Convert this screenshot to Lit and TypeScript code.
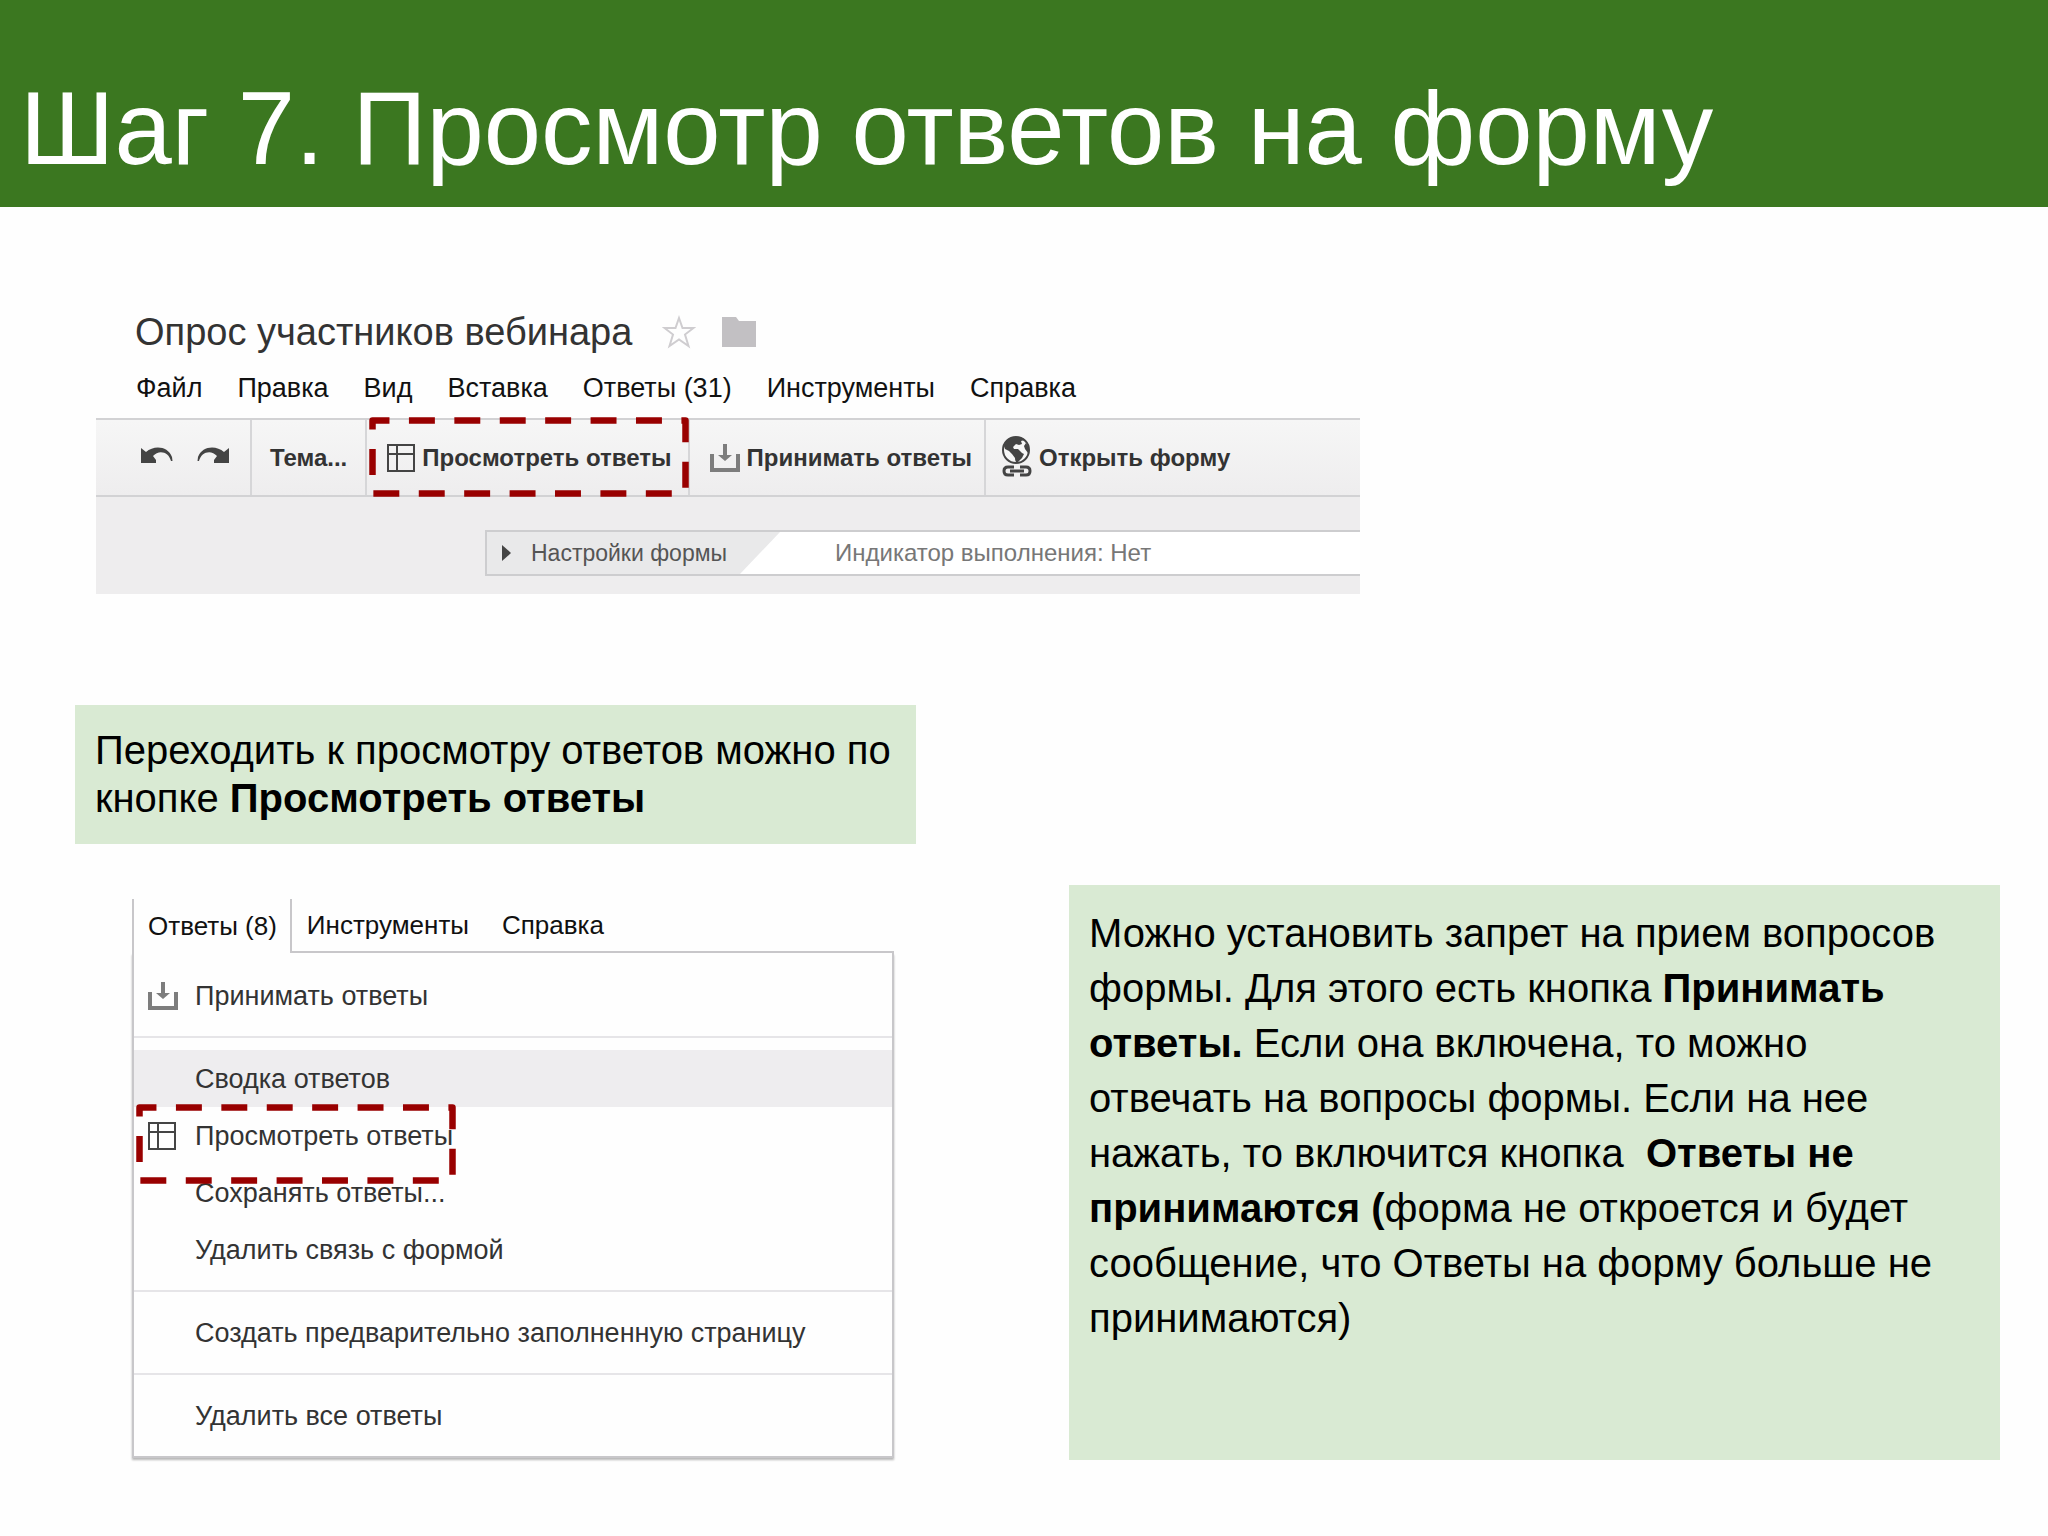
import { LitElement, html, css, svg, nothing } from "lit";
import { customElement, property } from "lit/decorators.js";

type IconName = "undo" | "redo" | "table" | "inbox" | "globe";

interface MenuEntry {
  label: string;
  icon?: IconName;
  active?: boolean;
}

const FORM_MENU = ["Файл", "Правка", "Вид", "Вставка", "Ответы (31)", "Инструменты", "Справка"];

const ANSWER_GROUPS: MenuEntry[][] = [
  [{ label: "Принимать ответы", icon: "inbox" }],
  [
    { label: "Сводка ответов", active: true },
    { label: "Просмотреть ответы", icon: "table" },
    { label: "Сохранять ответы..." },
    { label: "Удалить связь с формой" },
  ],
  [{ label: "Создать предварительно заполненную страницу" }],
  [{ label: "Удалить все ответы" }],
];

const SHAPES = {
  undo: {
    w: 34, h: 20,
    body: svg`<path fill="#444" d="M1 2 L6 6 C14 -1 28 0 32 11 L32.500 15 L31 15 C29 6 19 3 13 10 L16 14 L16 17 L1 17 Z"/>`,
  },
  redo: {
    w: 34, h: 20,
    body: svg`<path fill="#444" d="M33 2 L28 6 C20 -1 6 0 2 11 L1.500 15 L3 15 C5 6 15 3 21 10 L18 14 L18 17 L33 17 Z"/>`,
  },
  table: {
    w: 28, h: 28,
    body: svg`<path fill="none" stroke="#444" stroke-width="2" d="M1 1H27V27H1Z"/>
      <path fill="none" stroke="#444" stroke-width="2" d="M1 10H27M10 1V27"/>`,
  },
  inbox: {
    w: 30, h: 28,
    body: svg`<path fill="none" stroke="#7d7d7d" stroke-width="4" d="M2 10V26H28V10"/>
      <path fill="#7d7d7d" d="M13 0H17V11H22L15 17L8 11H13Z"/>`,
  },
  globe: {
    w: 30, h: 44,
    body: svg`<circle cx="14" cy="14" r="13" fill="#f6f6f6" stroke="#444" stroke-width="2"/>
      <path fill="#444" d="M2 10C4 4 9 1 14 1C18 1 21 2 23 4L19 5L20 8L17 9L14 8L11 11L12 13L16 13L20 17L22 18L20 22L16 26C14 27 13 25 13 22L10 18L7 15L3 13Z"/>
      <path fill="#444" d="M24 7L27 12L26 17L23 13L22 10Z"/>
      <path fill="none" stroke="#444" stroke-width="3" d="M12 31H6Q2 31 2 35Q2 39 6 39H12M18 31H24Q28 31 28 35Q28 39 24 39H18"/>
      <path stroke="#444" stroke-width="3" d="M8 35H22"/>`,
  },
};

@customElement("ui-icon")
class UiIcon extends LitElement {
  static styles = css`
    :host { display: inline-flex; flex: none; }
    svg { display: block; }
  `;
  @property() name: IconName = "table";
  render() {
    const s = SHAPES[this.name];
    return html`<svg width=${s.w} height=${s.h} viewBox="0 0 ${s.w} ${s.h}" aria-hidden="true">${s.body}</svg>`;
  }
}

@customElement("dash-frame")
class DashFrame extends LitElement {
  static styles = css`
    :host { display: block; pointer-events: none; }
    svg { display: block; }
  `;
  render() {
    return html`<svg width="320" height="80" viewBox="0 0 320 80" aria-hidden="true">
      <rect x="3.500" y="3.500" width="313" height="73" fill="none" stroke="#990000" stroke-width="6.500"
        stroke-linejoin="round" pathLength="773.500" stroke-dasharray="26 19.500" stroke-dashoffset="9"/>
    </svg>`;
  }
}

@customElement("app-root")
class AppRoot extends LitElement {
  static styles = css`
    :host {
      display: block;
      min-height: 100vh;
      background: #fefefe;
      color: #000;
      font-family: "Liberation Sans", Arial, sans-serif;
    }
    * { box-sizing: border-box; }
    button {
      font: inherit;
      color: inherit;
      background: none;
      border: 0;
      padding: 0;
      margin: 0;
      text-align: left;
      white-space: nowrap;
    }
    .banner {
      background: #3b7720;
      padding: 70px 20px 19px;
    }
    .banner h1 {
      margin: 0;
      color: #fff;
      font-size: 103px;
      line-height: 118px;
      font-weight: 400;
    }
    .form {
      margin: 103px 688px 0 96px;
      color: #333;
    }
    .form-name {
      display: flex;
      align-items: center;
      gap: 30px;
      padding-left: 39px;
      font-size: 38px;
      line-height: 44px;
    }
    .form-name h2 { margin: 0; font: inherit; }
    .form-name svg { display: block; }
    .marks { display: flex; gap: 26px; }
    .menubar {
      display: flex;
      gap: 35px;
      margin-top: 18px;
      padding-left: 40px;
      font-size: 27px;
      line-height: 32px;
      color: #111;
    }
    .toolbar {
      position: relative;
      display: flex;
      height: 79px;
      margin-top: 14px;
      border-top: 2px solid #d2d2d4;
      border-bottom: 2px solid #d2d2d4;
      background: linear-gradient(#f6f6f6, #eeedee);
      font-size: 24px;
      font-weight: 700;
    }
    .tool {
      display: flex;
      align-items: center;
      gap: 7px;
      padding: 0 16px 0 20px;
      border-right: 2px solid #d6d6d8;
    }
    .tool.history { gap: 22px; padding: 0 20px 0 44px; }
    .tool.theme { padding: 0 18px; }
    .tool.accept { padding-right: 12px; }
    .tool.open { padding-left: 16px; border-right: 0; }
    .tool-frame { position: absolute; left: 273px; top: -3px; }
    .canvas {
      padding: 33px 0 18px 389px;
      background: #eeedee;
    }
    .settings {
      display: flex;
      align-items: center;
      height: 46px;
      border: 2px solid #cdcdcf;
      border-right: 0;
      background: #fff;
      font-size: 24px;
      color: #777;
    }
    .settings-label {
      display: flex;
      align-items: center;
      gap: 20px;
      width: 293px;
      height: 42px;
      padding-left: 15px;
      background: #e9e9ea;
      clip-path: polygon(0 0, 100% 0, calc(100% - 40px) 100%, 0 100%);
      font-size: 23px;
      color: #555;
    }
    .settings-value { padding-left: 55px; white-space: nowrap; }
    .lower {
      display: grid;
      grid-template-columns: 841fr 931fr;
      column-gap: 153px;
      margin: 111px 48px 0 75px;
      padding-bottom: 75px;
    }
    .note {
      margin: 0;
      padding: 21px 20px 22px;
      background: #d9ead3;
      font-size: 40px;
      line-height: 48px;
    }
    .note.wide {
      margin-top: 180px;
      padding-right: 48px;
      line-height: 55px;
    }
    .answers {
      margin: 55px 22px 2px 57px;
      color: #333;
      font-size: 27px;
      line-height: 32px;
    }
    .tabs { display: flex; font-size: 26px; color: #111; }
    .tab {
      height: 54px;
      border-left: 2px solid #c8c7ca;
      padding: 0 13px 0 14px;
    }
    .rest {
      display: flex;
      gap: 33px;
      flex: 1;
      border-left: 2px solid #c8c7ca;
      border-bottom: 2px solid #c8c7ca;
      padding-left: 15px;
    }
    .list {
      position: relative;
      border: 2px solid #c8c7ca;
      border-top: 0;
      padding: 14px 0 12px;
      box-shadow: 0 2px 2px #b8b8b8;
    }
    .group + .group {
      margin-top: 12px;
      padding-top: 12px;
      border-top: 2px solid #e6e5e8;
    }
    .item {
      display: grid;
      grid-template-columns: 30px 1fr;
      column-gap: 17px;
      align-items: center;
      width: 100%;
      height: 57px;
      padding-left: 14px;
    }
    .item.active { background: #eeedef; }
    .label { grid-column: 2; }
    .list-frame { position: absolute; left: 2px; top: 151px; }
  `;

  private item(e: MenuEntry) {
    return html`<button class="item ${e.active ? "active" : ""}" role="menuitem">
      ${e.icon ? html`<ui-icon name=${e.icon}></ui-icon>` : nothing}<span class="label">${e.label}</span>
    </button>`;
  }

  render() {
    return html`
      <header class="banner"><h1>Шаг 7. Просмотр ответов на форму</h1></header>
      <main>
        <section class="form">
          <div class="form-name">
            <h2>Опрос участников вебинара</h2>
            <div class="marks">
              <button aria-label="Пометить">
                <svg width="34" height="34" viewBox="0 0 34 34"><path fill="none" stroke="#cfcdd0" stroke-width="2"
                  d="M17 3L20.500 13H31.500L23 19.500L26.500 31L17 24.500L7.500 31L11 19.500L2.500 13H13.500Z"/></svg>
              </button>
              <button aria-label="Папка">
                <svg width="34" height="34" viewBox="0 0 34 34"><path fill="#c2c0c3" d="M0 2H14L17 6H34V32H0Z"/></svg>
              </button>
            </div>
          </div>
          <nav class="menubar">${FORM_MENU.map((m) => html`<button>${m}</button>`)}</nav>
          <div class="toolbar" role="toolbar">
            <div class="tool history">
              <button aria-label="Отменить"><ui-icon name="undo"></ui-icon></button>
              <button aria-label="Повторить"><ui-icon name="redo"></ui-icon></button>
            </div>
            <button class="tool theme">Тема...</button>
            <button class="tool"><ui-icon name="table"></ui-icon>Просмотреть ответы</button>
            <button class="tool accept"><ui-icon name="inbox"></ui-icon>Принимать ответы</button>
            <button class="tool open"><ui-icon name="globe"></ui-icon>Открыть форму</button>
            <dash-frame class="tool-frame"></dash-frame>
          </div>
          <div class="canvas">
            <div class="settings">
              <button class="settings-label">
                <svg width="9" height="16" viewBox="0 0 9 16" aria-hidden="true"><path fill="#444" d="M0 0L9 8L0 16Z"/></svg>
                Настройки формы
              </button>
              <span class="settings-value">Индикатор выполнения: Нет</span>
            </div>
          </div>
        </section>
        <div class="lower">
          <div>
            <p class="note">Переходить к просмотру ответов можно по кнопке <b>Просмотреть ответы</b></p>
            <section class="answers">
              <div class="tabs">
                <button class="tab">Ответы (8)</button>
                <div class="rest"><button>Инструменты</button><button>Справка</button></div>
              </div>
              <div class="list" role="menu">
                ${ANSWER_GROUPS.map((g) => html`<div class="group">${g.map((e) => this.item(e))}</div>`)}
                <dash-frame class="list-frame"></dash-frame>
              </div>
            </section>
          </div>
          <p class="note wide">Можно установить запрет на прием вопросов формы. Для этого есть кнопка <b>Принимать ответы.</b> Если она включена, то можно отвечать на вопросы формы. Если на нее нажать, то включится кнопка &nbsp;<b>Ответы не принимаются (</b>форма не откроется и будет сообщение, что Ответы на форму больше не принимаются)</p>
        </div>
      </main>
    `;
  }
}
